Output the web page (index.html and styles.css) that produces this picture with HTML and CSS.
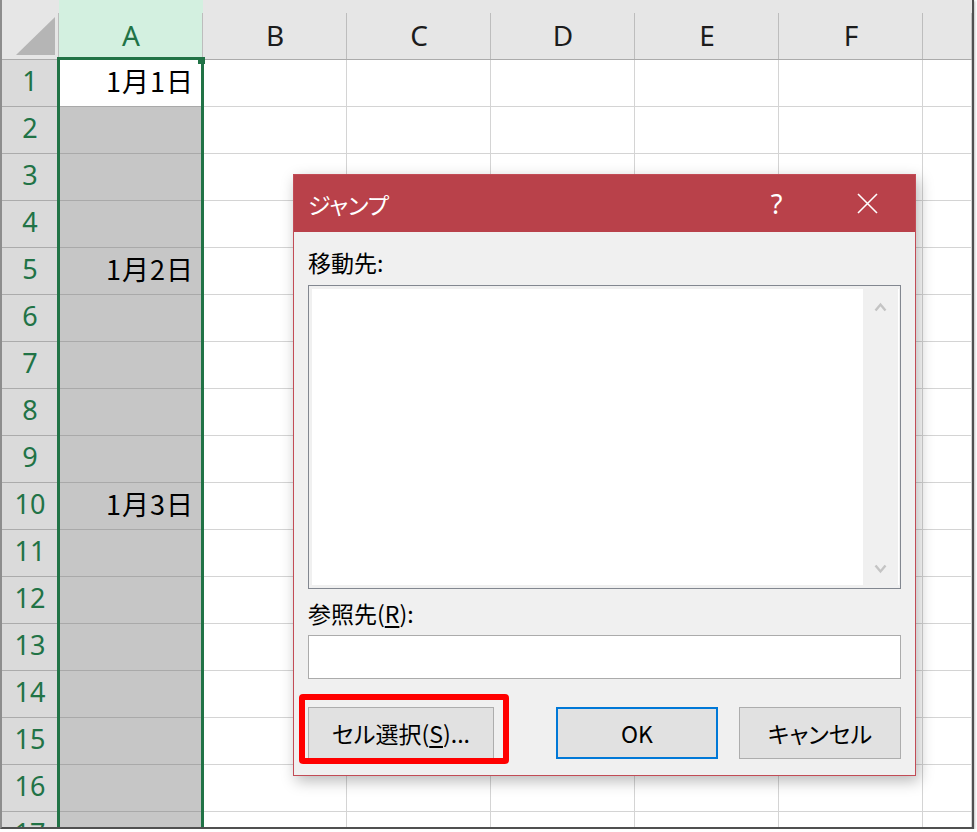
FILE: index.html
```html
<!DOCTYPE html>
<html lang="ja">
<head>
<meta charset="UTF-8" />
<title>ジャンプ</title>
<link rel="stylesheet" href="styles.css">
</head>
<body>

<div class="shot">
  <!-- sheet grid -->
  <div class="sheet">
    <div class="hd corner"><svg width="57" height="59" viewBox="0 0 57 59"><polygon points="14,55 53,55 53,17" fill="#b5b5b5"/></svg></div>
    <div class="hd sel">A</div><div class="hd">B</div><div class="hd">C</div><div class="hd">D</div><div class="hd">E</div><div class="hd">F</div><div class="hd"></div>

    <div class="rh">1</div><div class="c a active">1月1日</div><div class="c"></div><div class="c"></div><div class="c"></div><div class="c"></div><div class="c"></div><div class="c"></div>
    <div class="rh">2</div><div class="c a"></div><div class="c"></div><div class="c"></div><div class="c"></div><div class="c"></div><div class="c"></div><div class="c"></div>
    <div class="rh">3</div><div class="c a"></div><div class="c"></div><div class="c"></div><div class="c"></div><div class="c"></div><div class="c"></div><div class="c"></div>
    <div class="rh">4</div><div class="c a"></div><div class="c"></div><div class="c"></div><div class="c"></div><div class="c"></div><div class="c"></div><div class="c"></div>
    <div class="rh">5</div><div class="c a">1月2日</div><div class="c"></div><div class="c"></div><div class="c"></div><div class="c"></div><div class="c"></div><div class="c"></div>
    <div class="rh">6</div><div class="c a"></div><div class="c"></div><div class="c"></div><div class="c"></div><div class="c"></div><div class="c"></div><div class="c"></div>
    <div class="rh">7</div><div class="c a"></div><div class="c"></div><div class="c"></div><div class="c"></div><div class="c"></div><div class="c"></div><div class="c"></div>
    <div class="rh">8</div><div class="c a"></div><div class="c"></div><div class="c"></div><div class="c"></div><div class="c"></div><div class="c"></div><div class="c"></div>
    <div class="rh">9</div><div class="c a"></div><div class="c"></div><div class="c"></div><div class="c"></div><div class="c"></div><div class="c"></div><div class="c"></div>
    <div class="rh">10</div><div class="c a">1月3日</div><div class="c"></div><div class="c"></div><div class="c"></div><div class="c"></div><div class="c"></div><div class="c"></div>
    <div class="rh">11</div><div class="c a"></div><div class="c"></div><div class="c"></div><div class="c"></div><div class="c"></div><div class="c"></div><div class="c"></div>
    <div class="rh">12</div><div class="c a"></div><div class="c"></div><div class="c"></div><div class="c"></div><div class="c"></div><div class="c"></div><div class="c"></div>
    <div class="rh">13</div><div class="c a"></div><div class="c"></div><div class="c"></div><div class="c"></div><div class="c"></div><div class="c"></div><div class="c"></div>
    <div class="rh">14</div><div class="c a"></div><div class="c"></div><div class="c"></div><div class="c"></div><div class="c"></div><div class="c"></div><div class="c"></div>
    <div class="rh">15</div><div class="c a"></div><div class="c"></div><div class="c"></div><div class="c"></div><div class="c"></div><div class="c"></div><div class="c"></div>
    <div class="rh">16</div><div class="c a"></div><div class="c"></div><div class="c"></div><div class="c"></div><div class="c"></div><div class="c"></div><div class="c"></div>
    <div class="rh">17</div><div class="c a"></div><div class="c"></div><div class="c"></div><div class="c"></div><div class="c"></div><div class="c"></div><div class="c"></div>
  </div>

  <!-- selected column frame + fill handle -->
  <div class="col-sel"></div>
  <div class="fill-handle"></div>

  <!-- jump dialog -->
  <div class="dialog">
    <div class="dlg-title">
      <span class="dlg-name">ジャンプ</span>
      <span class="dlg-btn help">?</span>
      <span class="dlg-btn close"><svg width="21" height="21" viewBox="0 0 21 21"><path d="M1 1L20 20M20 1L1 20" stroke="#fff" stroke-width="1.6" fill="none"/></svg></span>
    </div>
    <div class="dlg-body">
      <div class="lbl">移動先:</div>
      <div class="listbox">
        <div class="list-area"></div>
        <div class="vscroll">
          <svg width="13" height="10" viewBox="0 0 13 10"><polyline points="1.5,8.5 6.5,2.5 11.5,8.5" stroke="#c4c4c4" stroke-width="2.4" fill="none"/></svg>
          <svg width="13" height="10" viewBox="0 0 13 10"><polyline points="1.5,1.5 6.5,7.5 11.5,1.5" stroke="#c4c4c4" stroke-width="2.4" fill="none"/></svg>
        </div>
      </div>
      <div class="lbl lbl-ref">参照先(<u>R</u>):</div>
      <div class="textbox"></div>
      <div class="btn-row">
        <div class="btn wide">セル選択(<u>S</u>)...</div>
        <div class="btn default">OK</div>
        <div class="btn">キャンセル</div>
      </div>
    </div>
  </div>

  <!-- red marker round the button -->
  <div class="callout"></div>
</div>

</body>
</html>
```

FILE: styles.css
```css
body {
  margin: 0;
  background: #fff;
}
.shot {
  position: relative;
  width: 970px;
  height: 827px;
  border-left: 2px solid #8d8d8d;
  border-right: 2px solid #505050;
  border-bottom: 2px solid #505050;
  box-shadow: 1px 1px 2px rgba(0, 0, 0, 0.25);
  overflow: hidden;
}
/* SHEET */
.sheet {
  display: grid;
  grid-template-columns: 57px repeat(6, 144px) 1fr;
  grid-template-rows: 60px;
  grid-auto-rows: 47px;
  font-family: "Noto Sans", "Open Sans", sans-serif;
}
.sheet > div {
  box-sizing: border-box;
}
.hd {
  background: linear-gradient(#bdbdbd, #bdbdbd) right bottom / 1px 46px no-repeat, #e6e6e6;
  border-bottom: 1px solid #ababab;
  padding: 13px 0 3px 0;
  display: flex;
  align-items: center;
  justify-content: center;
  font-size: 28px;
  color: #1c1c1c;
}
.hd.sel {
  background: linear-gradient(#bdbdbd, #bdbdbd) right bottom / 1px 46px no-repeat, #d3f0e0;
  color: #217346;
}
.hd.corner {
  display: block;
  padding: 0;
}
.hd.corner svg {
  display: block;
}
.rh {
  background: #dadada;
  border-right: 1px solid #b0b0b0;
  border-bottom: 1px solid #ababab;
  padding-bottom: 5px;
  display: flex;
  align-items: center;
  justify-content: center;
  font-size: 27px;
  color: #217346;
}
.c {
  background: #fff;
  border-right: 1px solid #d4d4d4;
  border-bottom: 1px solid #d4d4d4;
}
.c.a {
  background: #c6c6c6;
  border-bottom-color: #a9a9a9;
  display: flex;
  align-items: center;
  justify-content: flex-end;
  padding: 0 8px 6px 0;
  font-family: "Noto Sans CJK JP", sans-serif;
  font-size: 27px;
  letter-spacing: 1px;
  color: #000;
}
.c.a.active {
  background: #fff;
}
.col-sel {
  position: absolute;
  left: 55px;
  top: 57px;
  width: 147px;
  height: 800px;
  box-sizing: border-box;
  border: 3px solid #217346;
}
.fill-handle {
  position: absolute;
  left: 196px;
  top: 57px;
  width: 7px;
  height: 7px;
  background: #217346;
}
/* DIALOG */
.dialog {
  position: absolute;
  left: 291px;
  top: 174px;
  width: 623px;
  height: 602px;
  box-sizing: border-box;
  border: 1px solid #c24c56;
  background: #f0f0f0;
  box-shadow: 3px 5px 14px rgba(0, 0, 0, 0.28);
  font-family: "Noto Sans CJK JP", sans-serif;
  color: #000;
}
.dlg-title {
  height: 57px;
  background: #b9414a;
  color: #fff;
  display: flex;
  align-items: center;
  padding: 0 2px 0 14px;
}
.dlg-name {
  flex: 1;
  font-size: 23px;
  font-feature-settings: "palt";
}
.dlg-btn {
  width: 91px;
  display: flex;
  justify-content: center;
  align-items: center;
}
.dlg-btn.help {
  font-family: "Noto Sans", sans-serif;
  font-size: 27px;
}
.dlg-btn.close svg {
  display: block;
}
.dlg-body {
  padding: 14px 14px 16px 14px;
}
.lbl {
  height: 32px;
  line-height: 32px;
  font-size: 23px;
  margin-bottom: 7px;
}
.lbl-ref {
  margin: 8px 0 6px 0;
}
.lbl u {
  text-underline-offset: 3px;
}
.listbox {
  height: 304px;
  box-sizing: border-box;
  border: 1px solid #828790;
  background: #f0f0f0;
  padding: 3px 1px 3px 3px;
  display: flex;
}
.list-area {
  flex: 1;
  background: #fff;
}
.vscroll {
  width: 35px;
  border-right: 1px solid #fff;
  display: flex;
  flex-direction: column;
  justify-content: space-between;
  align-items: center;
  padding: 13px 0 11px 0;
}
.vscroll svg {
  display: block;
}
.textbox {
  height: 44px;
  box-sizing: border-box;
  border: 1px solid #ababab;
  background: #fff;
}
.btn-row {
  display: flex;
  gap: 21px;
  margin-top: 28px;
}
.btn {
  width: 162px;
  height: 52px;
  box-sizing: border-box;
  border: 1px solid #adadad;
  background: #e1e1e1;
  display: flex;
  align-items: center;
  justify-content: center;
  font-size: 23px;
  font-feature-settings: "palt";
}
.btn u {
  text-underline-offset: 3px;
}
.btn.wide {
  width: 186px;
}
.btn.default {
  margin-left: auto;
  border: 2px solid #0078d7;
}
.callout {
  position: absolute;
  left: 297px;
  top: 694px;
  width: 210px;
  height: 70px;
  box-sizing: border-box;
  border: 6px solid #ff0000;
  border-radius: 4px;
}
```
